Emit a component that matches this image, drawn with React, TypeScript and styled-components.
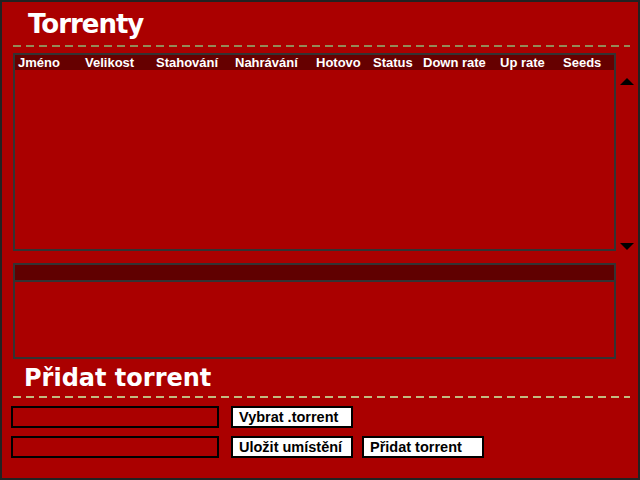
import React from 'react';
import styled, {createGlobalStyle} from "styled-components";

const GlobalStyle = createGlobalStyle`
    body {
        margin: 0;
        background: #ffffff;
        font-family: "Liberation Sans", Arial, sans-serif;
    }
`

const columns = [
    {title: "Jméno", width: 67},
    {title: "Velikost", width: 71},
    {title: "Stahování", width: 79},
    {title: "Nahrávání", width: 81},
    {title: "Hotovo", width: 57},
    {title: "Status", width: 50},
    {title: "Down rate", width: 77},
    {title: "Up rate", width: 63},
    {title: "Seeds", width: 40},
];

export default function App() {
    return (
        <>
            <GlobalStyle/>
            <Page>
                <Title>Torrenty</Title>
                <Rule color={"#948a58"}/>
                <TableArea>
                    <TableBox>
                        <HeaderRow>
                            {columns.map(c => (
                                <HeaderCell key={c.title} $width={c.width}>{c.title}</HeaderCell>
                            ))}
                        </HeaderRow>
                    </TableBox>
                    <Scroller>
                        <Arrow $up/>
                        <Arrow/>
                    </Scroller>
                </TableArea>
                <DetailBox>
                    <DetailBar/>
                </DetailBox>
                <SubTitle>Přidat torrent</SubTitle>
                <Rule color={"#c2ba80"}/>
                <Form>
                    <FormRow>
                        <Field/>
                        <Button>Vybrat .torrent</Button>
                    </FormRow>
                    <FormRow>
                        <Field/>
                        <Button>Uložit umístění</Button>
                        <Button $gap={9}>Přidat torrent</Button>
                    </FormRow>
                </Form>
            </Page>
        </>
    );
}

const Page = styled.div`
    width: 640px;
    height: 480px;
    box-sizing: border-box;
    border: 2px solid #222;
    background-color: #aa0000;
    display: flex;
    flex-direction: column;
`
const Title = styled.h1`
    margin: 2px 0 0 26px;
    height: 40px;
    line-height: 40px;
    font-family: "Comic Sans MS", "DejaVu Sans", sans-serif;
    font-size: 26px;
    font-weight: bold;
    letter-spacing: -1px;
    color: #ffffff;
`
const Rule = styled.div<{ color: string }>`
    margin: 1px 8px 0 11px;
    height: 2px;
    background: repeating-linear-gradient(to right, ${p => p.color} 0 8px, transparent 8px 13px);
`
const TableArea = styled.div`
    display: flex;
    margin: 6px 0 0 11px;
`
const TableBox = styled.div`
    width: 603px;
    height: 198px;
    box-sizing: border-box;
    border: 2px solid #333;
`
const HeaderRow = styled.div`
    display: flex;
    height: 15px;
    padding-left: 3px;
    background-color: #660000;
`
const HeaderCell = styled.div<{ $width: number }>`
    width: ${p => p.$width}px;
    flex-shrink: 0;
    color: #ffffff;
    font-size: 13px;
    font-weight: bold;
    line-height: 15px;
    white-space: nowrap;
`
const Scroller = styled.div`
    width: 20px;
    display: flex;
    flex-direction: column;
    justify-content: space-between;
    align-items: center;
    padding: 25px 0 0 1px;
    box-sizing: border-box;
    height: 197px;
`
const Arrow = styled.div<{ $up?: boolean }>`
    width: 0;
    height: 0;
    border-left: 7px solid transparent;
    border-right: 7px solid transparent;
    ${p => p.$up ? "border-bottom: 7px solid #000;" : "border-top: 7px solid #000;"}
`
const DetailBox = styled.div`
    margin: 12px 0 0 11px;
    width: 603px;
    height: 96px;
    box-sizing: border-box;
    border: 2px solid #333;
`
const DetailBar = styled.div`
    height: 15px;
    background-color: #600000;
    border-bottom: 2px solid #333;
`
const SubTitle = styled.h2`
    margin: 2px 0 0 22px;
    height: 34px;
    line-height: 34px;
    font-family: "Comic Sans MS", "DejaVu Sans", sans-serif;
    font-size: 24px;
    font-weight: bold;
    color: #ffffff;
`
const Form = styled.div`
    display: flex;
    flex-direction: column;
    gap: 8px;
    margin: 8px 0 0 9px;
`
const FormRow = styled.div`
    display: flex;
`
const Field = styled.div`
    width: 208px;
    height: 22px;
    box-sizing: border-box;
    border: 2px solid #000;
    background-color: #aa0000;
`
const Button = styled.div<{ $gap?: number }>`
    margin-left: ${p => p.$gap ?? 12}px;
    width: 122px;
    height: 22px;
    box-sizing: border-box;
    border: 2px solid #000;
    background-color: #ffffff;
    padding-left: 6px;
    font-size: 14.5px;
    font-weight: bold;
    line-height: 18px;
    color: #000;
    white-space: nowrap;
`
